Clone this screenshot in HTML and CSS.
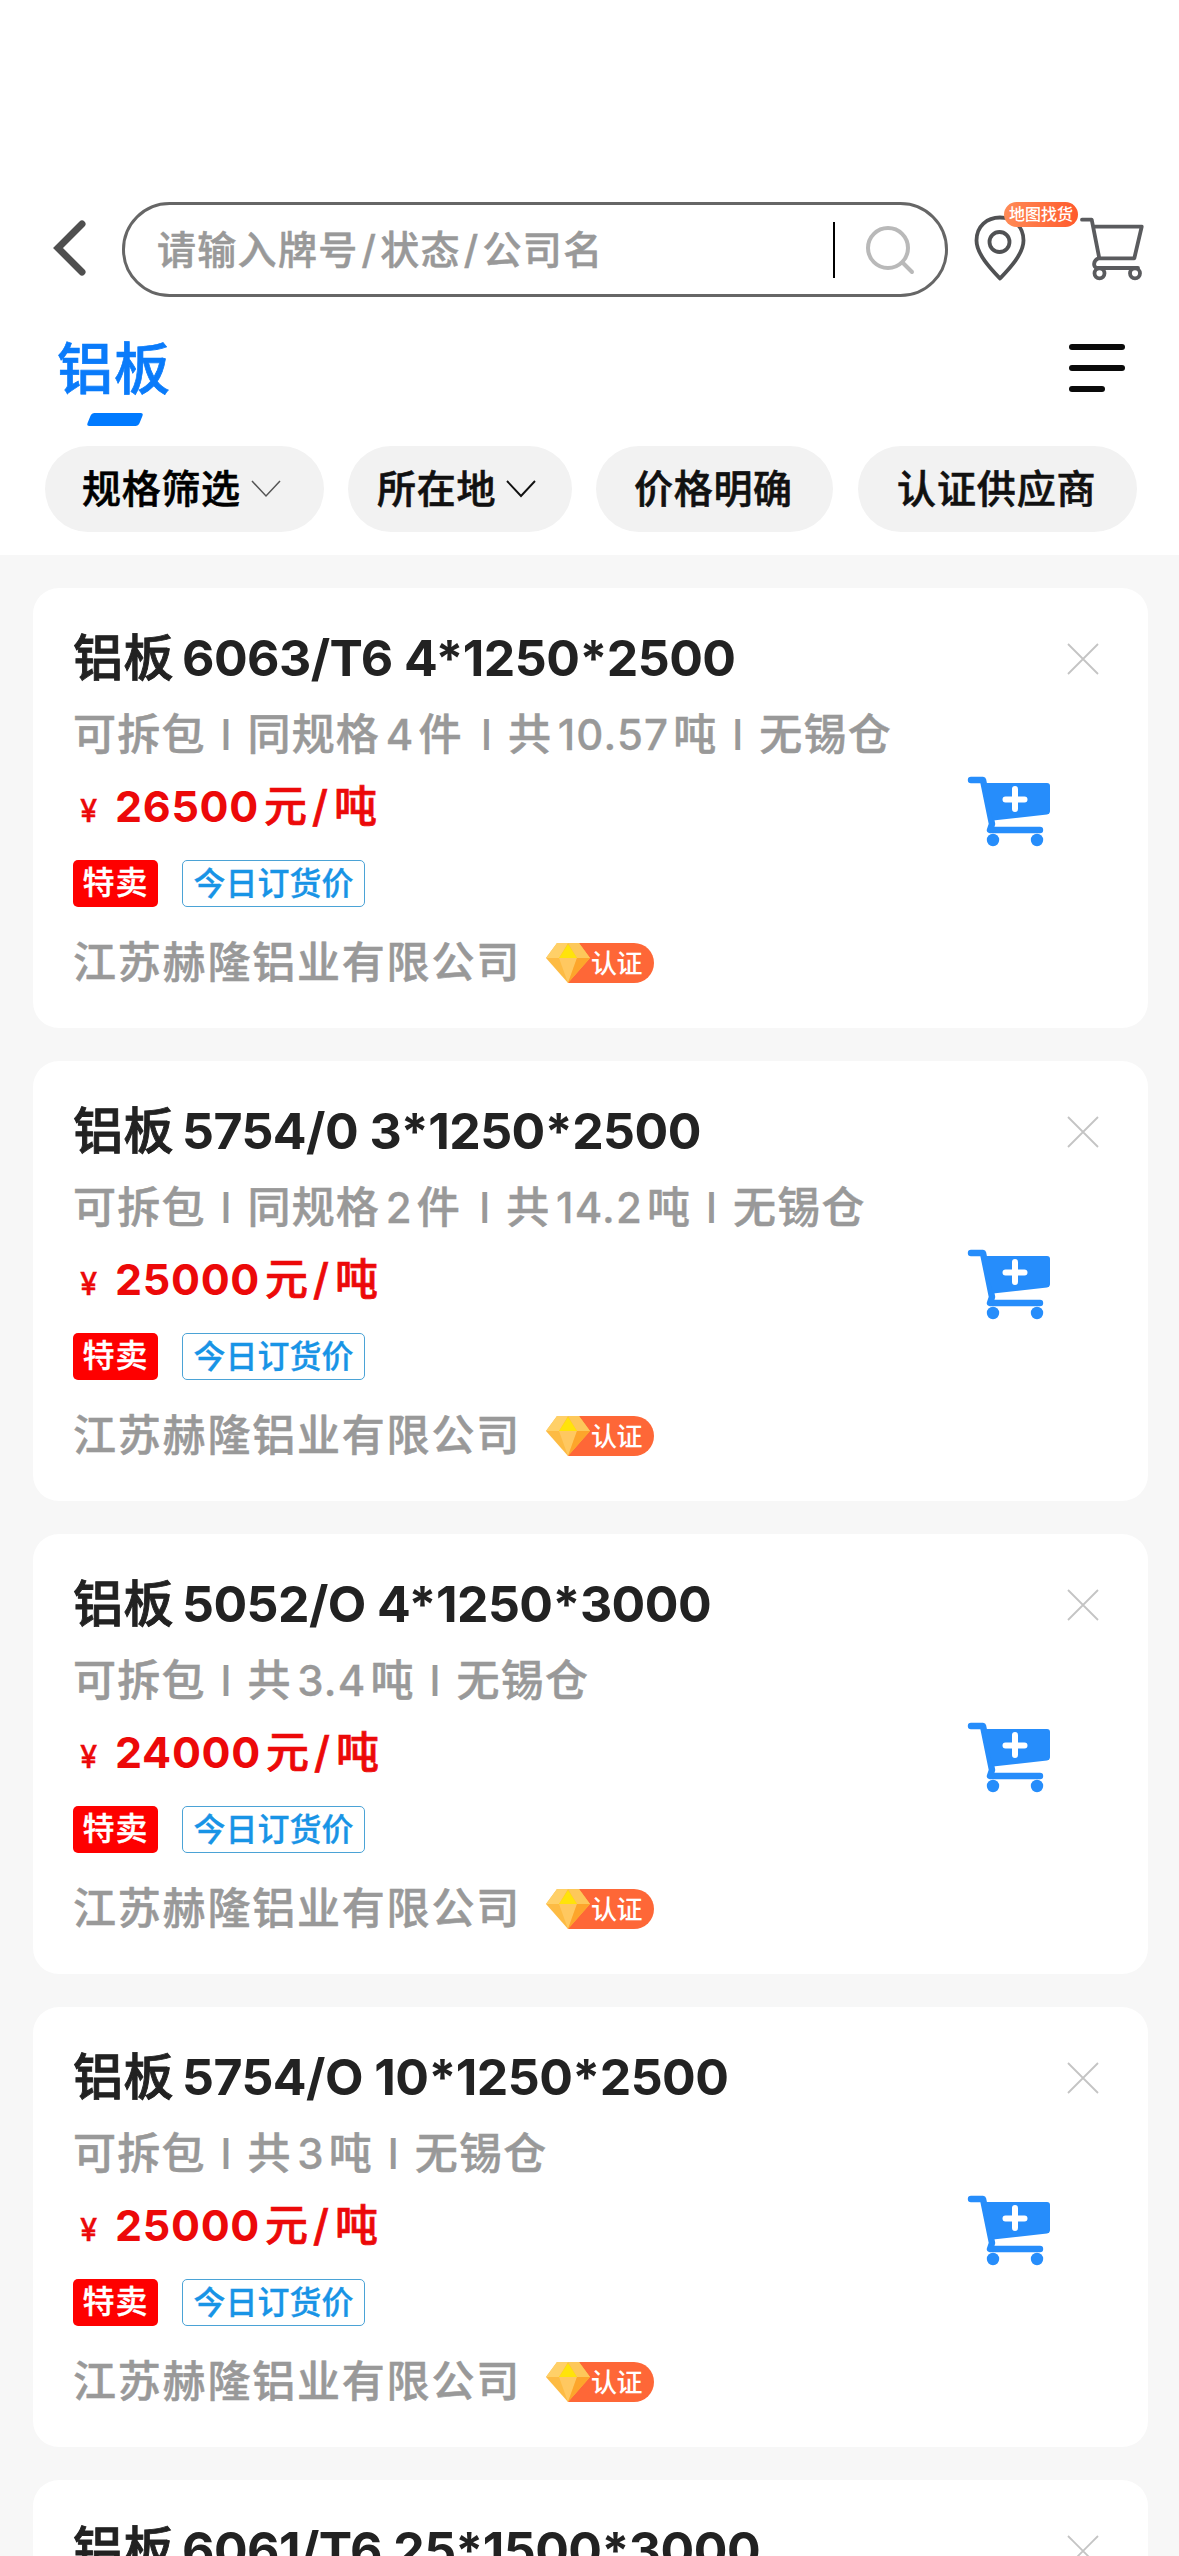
FILE: index.html
```html
<!DOCTYPE html>
<html lang="zh-CN">
<head>
<meta charset="utf-8">
<title>铝板</title>
<link rel="stylesheet" href="styles.css">
</head>
<body>
<svg class="defs" width="0" height="0">
  <symbol id="close" viewBox="0 0 32 32"><path d="M1 1L31 31M31 1L1 31" stroke="#c4c4c4" stroke-width="1.8" fill="none"/></symbol>
  <symbol id="add-cart" viewBox="0 0 84 72">
    <g fill="none" stroke="#268dfb" stroke-linecap="round" stroke-linejoin="round">
      <path d="M4 4H16L25 48L23 54H73" stroke-width="6.4"/>
    </g>
    <path d="M16 7H80Q83 7 83 10V35Q83 38 80 38.400L26 44.500Z" fill="#268dfb"/>
    <circle cx="26" cy="64" r="6.200" fill="#268dfb"/><circle cx="70" cy="64" r="6.200" fill="#268dfb"/>
    <path d="M38.500 23.500H57.500M48 13V33" stroke="#fff" stroke-width="6" stroke-linecap="round"/>
  </symbol>
  <symbol id="gem" viewBox="0 0 108 40">
    <path d="M33 0H88A20 20 0 0 1 88 40H22Z" fill="#fe6737"/>
    <path d="M0 15L11 0H33L44 15L22 40Z" fill="#fdbb43"/>
    <path d="M0 15L11 0L13 15ZM11 0H22L13 15Z" fill="#ffd068"/>
    <path d="M33 0L44 15H31L22 0Z" fill="#fdc85a"/>
    <path d="M13 15H31L22 40Z" fill="#ffc860"/>
    <path d="M31 15H44L22 40Z" fill="#fda52b"/>
    <path d="M22 1L31 15H13Z" fill="#ffe30a"/>
  </symbol>
</svg>
<header class="top">
  <div class="searchbar">
    <svg class="back" viewBox="0 0 36 60"><path d="M30 6L6 30L30 54" fill="none" stroke="#4f4f4f" stroke-width="7" stroke-linecap="round"/></svg>
    <div class="search">
      <span class="placeholder">请输入牌号<i>/</i>状态<i>/</i>公司名</span>
      <span class="divider"></span>
      <svg class="lens" viewBox="0 0 50 50"><g fill="none" stroke="#b9b9b9" stroke-width="4" stroke-linecap="round"><circle cx="23" cy="23" r="20"/><path d="M38 38L47 47"/></g></svg>
    </div>
    <div class="map">
      <svg viewBox="0 0 52 66"><g fill="none" stroke="#505153" stroke-width="3.800" stroke-linejoin="round"><path d="M26 63.500C17 54 2.500 39 2.500 25.500C2.500 11 13 2.500 26 2.500S49.500 11 49.500 25.500C49.500 39 35 54 26 63.500Z"/><circle cx="25.500" cy="27" r="10"/></g></svg>
      <span class="map-badge">地图找货</span>
    </div>
    <svg class="cart" viewBox="0 0 66 66"><g fill="none" stroke="#5a5b5e" stroke-width="3.800" stroke-linecap="round" stroke-linejoin="round"><path d="M3 4.700H12.700L20.300 43.300H55.300L62.700 11.700H14.300M19 43.500C14 46 14 52 18 53H59"/><circle cx="20.500" cy="58.300" r="5"/><circle cx="56" cy="58.300" r="5"/></g></svg>
  </div>
  <div class="tabs">
    <div class="tab">铝板<span class="tab-line"></span></div>
    <div class="menu"><span></span><span></span><span></span></div>
  </div>
  <nav class="filters">
    <div class="chip chip-spec">规格筛选<svg viewBox="0 0 30 18"><path d="M1 1L15 16L29 1" fill="none" stroke="#555" stroke-width="1.500"/></svg></div>
    <div class="chip chip-place">所在地<svg viewBox="0 0 30 18"><path d="M1 1L15 16L29 1" fill="none" stroke="#111" stroke-width="1.900"/></svg></div>
    <div class="chip chip-price">价格明确</div>
    <div class="chip chip-cert">认证供应商</div>
  </nav>
</header>
<main class="list">
  <article class="card">
    <div class="head"><h2>铝板<b>6063/T6 4*1250*2500</b></h2><svg class="close"><use href="#close"/></svg></div>
    <div class="middle"><div>
      <p class="spec">可拆包<i>I</i>同规格<b>4</b>件<i class="wide">I</i>共<b>10.57</b>吨<i>I</i>无锡仓</p>
      <p class="price"><small>¥</small><b>26500</b>元<i>/</i>吨</p>
    </div><svg class="add"><use href="#add-cart"/></svg></div>
    <div class="tags"><span class="tag sale">特卖</span><span class="tag today">今日订货价</span></div>
    <div class="company"><span>江苏赫隆铝业有限公司</span><span class="cert"><svg><use href="#gem"/></svg><em>认证</em></span></div>
  </article>
  <article class="card">
    <div class="head"><h2>铝板<b>5754/0 3*1250*2500</b></h2><svg class="close"><use href="#close"/></svg></div>
    <div class="middle"><div>
      <p class="spec">可拆包<i>I</i>同规格<b>2</b>件<i class="wide">I</i>共<b>14.2</b>吨<i>I</i>无锡仓</p>
      <p class="price"><small>¥</small><b>25000</b>元<i>/</i>吨</p>
    </div><svg class="add"><use href="#add-cart"/></svg></div>
    <div class="tags"><span class="tag sale">特卖</span><span class="tag today">今日订货价</span></div>
    <div class="company"><span>江苏赫隆铝业有限公司</span><span class="cert"><svg><use href="#gem"/></svg><em>认证</em></span></div>
  </article>
  <article class="card">
    <div class="head"><h2>铝板<b>5052/O 4*1250*3000</b></h2><svg class="close"><use href="#close"/></svg></div>
    <div class="middle"><div>
      <p class="spec">可拆包<i>I</i>共<b>3.4</b>吨<i>I</i>无锡仓</p>
      <p class="price"><small>¥</small><b>24000</b>元<i>/</i>吨</p>
    </div><svg class="add"><use href="#add-cart"/></svg></div>
    <div class="tags"><span class="tag sale">特卖</span><span class="tag today">今日订货价</span></div>
    <div class="company"><span>江苏赫隆铝业有限公司</span><span class="cert"><svg><use href="#gem"/></svg><em>认证</em></span></div>
  </article>
  <article class="card">
    <div class="head"><h2>铝板<b>5754/O 10*1250*2500</b></h2><svg class="close"><use href="#close"/></svg></div>
    <div class="middle"><div>
      <p class="spec">可拆包<i>I</i>共<b>3</b>吨<i>I</i>无锡仓</p>
      <p class="price"><small>¥</small><b>25000</b>元<i>/</i>吨</p>
    </div><svg class="add"><use href="#add-cart"/></svg></div>
    <div class="tags"><span class="tag sale">特卖</span><span class="tag today">今日订货价</span></div>
    <div class="company"><span>江苏赫隆铝业有限公司</span><span class="cert"><svg><use href="#gem"/></svg><em>认证</em></span></div>
  </article>
  <article class="card">
    <div class="head"><h2>铝板<b>6061/T6 25*1500*3000</b></h2><svg class="close"><use href="#close"/></svg></div>
  </article>
</main>
</body>
</html>
```
FILE: styles.css
```css
* { box-sizing: border-box; margin: 0; padding: 0; }
html, body { height: 2556px; overflow: hidden; }
body {
  width: 1179px;
  display: flex;
  flex-direction: column;
  background: #f7f7f7;
  font-family: Inter, "Noto Sans CJK SC", sans-serif;
  font-weight: 500;
  font-feature-settings: "calt" 0;
  -webkit-text-stroke: 0.5px currentColor;
}
svg { display: block; flex: none; }
i, em { font-style: normal; }
b { -webkit-text-stroke: 0; }
.defs { position: absolute; }

.top { height: 555px; flex: none; background: #fff; padding-top: 202px; }
.searchbar { display: flex; height: 95px; padding-left: 52px; align-items: center; }
.back { width: 36px; height: 60px; margin-top: -3px; }
.search {
  width: 826px; height: 95px; margin-left: 34px;
  border: 3px solid #666; border-radius: 48px;
  display: flex; align-items: center; padding-left: 32px;
}
.placeholder { width: 676px; font-size: 39px; letter-spacing: 1.3px; color: #999; line-height: 60px; white-space: nowrap; }
.placeholder i { margin: 0 3px; }
.divider { width: 2px; height: 56px; background: #000; }
.lens { width: 50px; height: 50px; margin-left: 30px; }
.map { position: relative; margin: -3px 0 0 26px; }
.map svg { width: 52px; height: 66px; }
.map-badge {
  position: absolute; left: 30px; top: -13px; width: 74px; height: 25px;
  border-radius: 13px; background: linear-gradient(90deg, #ff8b57, #ff5a2c);
  color: #fff; font-size: 16px; line-height: 24px; text-align: center; white-space: nowrap;
  -webkit-text-stroke: 0;
}
.cart { width: 66px; height: 66px; margin: -4px 0 0 53px; }

.tabs { display: flex; justify-content: space-between; height: 149px; padding: 31px 54px 0 57px; }
.tab { position: relative; font-size: 56px; line-height: 82px; letter-spacing: 1px; color: #0a7bfa; height: 100px; -webkit-text-stroke: 0.7px currentColor; }
.tab-line { position: absolute; left: 32px; bottom: 2px; width: 52px; height: 13px; border-radius: 3px; background: #007aff; transform: skewX(-22deg); }
.menu { display: flex; flex-direction: column; gap: 15px; padding-top: 16px; width: 56px; }
.menu span { height: 6px; border-radius: 3px; background: #0a0a0a; }
.menu span:last-child { width: 36px; }

.filters { display: flex; padding-left: 45px; }
.chip {
  height: 86px; border-radius: 43px; background: #f2f2f2; color: #111;
  font-size: 39px; letter-spacing: 0.7px; display: flex; align-items: center;
  padding-bottom: 7px; white-space: nowrap; -webkit-text-stroke: 0.6px currentColor;
}
.chip svg { width: 30px; height: 18px; margin: 7px 0 0 10px; }
.chip-spec { width: 279px; padding-left: 37px; color: #000; }
.chip-place { width: 224px; margin-left: 24px; padding-left: 29px; }
.chip-price { width: 237px; margin-left: 24px; padding-left: 38px; }
.chip-cert { width: 279px; margin-left: 25px; padding-left: 39px; letter-spacing: 0.9px; }

.list { display: flex; flex-direction: column; gap: 33px; padding: 33px 31px 0 33px; }
.card { height: 440px; flex: none; background: #fff; border-radius: 26px; padding: 40px 40px 0 40px; }
.head { display: flex; justify-content: space-between; height: 68px; }
h2 { font-size: 50px; line-height: 60px; font-weight: 500; letter-spacing: 0.5px; color: #222; white-space: nowrap; -webkit-text-stroke: 0.9px currentColor; }
h2 b { font-weight: 650; margin-left: 8px; letter-spacing: -0.55px; }
.close { width: 32px; height: 32px; margin: 15px 9px 0 0; }
.middle { display: flex; justify-content: space-between; height: 151px; }
.spec { height: 75px; font-size: 43px; line-height: 76px; letter-spacing: 1.2px; color: #999; white-space: nowrap; }
.spec b { font-weight: 500; font-size: 42px; margin: 0 4px 0 5.6px; -webkit-text-stroke: 0.3px currentColor; }
.spec i { font-size: 42px; margin: 0 14.6px; -webkit-text-stroke: 0; }
.spec .wide { margin-left: 18px; }
.price { height: 70px; font-size: 43px; line-height: 70px; letter-spacing: 1px; color: #ec0909; white-space: nowrap; -webkit-text-stroke: 0.7px currentColor; }
.price small { display: inline-block; width: 42px; padding-left: 7px; font-size: 31px; -webkit-text-stroke: 0.3px currentColor; }
.price b { font-weight: 650; margin-right: 5px; letter-spacing: 0.7px; }
.price i { margin: 0 5px 0 4px; }
.add { width: 84px; height: 72px; margin: 80px 57px 0 0; }
.tags { display: flex; gap: 24px; height: 68px; padding-top: 13px; }
.tag { height: 47px; border-radius: 5px; font-size: 32px; line-height: 46px; text-align: center; white-space: nowrap; -webkit-text-stroke: 0.3px currentColor; }
.sale { width: 85px; background: #fe0000; color: #fff; letter-spacing: 1px; }
.today { width: 183px; border: 1.500px solid #4ba3d6; color: #1894e6; line-height: 45px; }
.company { display: flex; align-items: center; height: 88px; font-size: 43px; letter-spacing: 1.8px; color: #999; }
.cert { position: relative; width: 108px; height: 40px; margin: 7px 0 0 25px; }
.cert svg { width: 108px; height: 40px; }
.cert em { position: absolute; left: 45px; top: 0; font-size: 26px; line-height: 41px; letter-spacing: -0.500px; color: #fff; -webkit-text-stroke: 0; }
```
